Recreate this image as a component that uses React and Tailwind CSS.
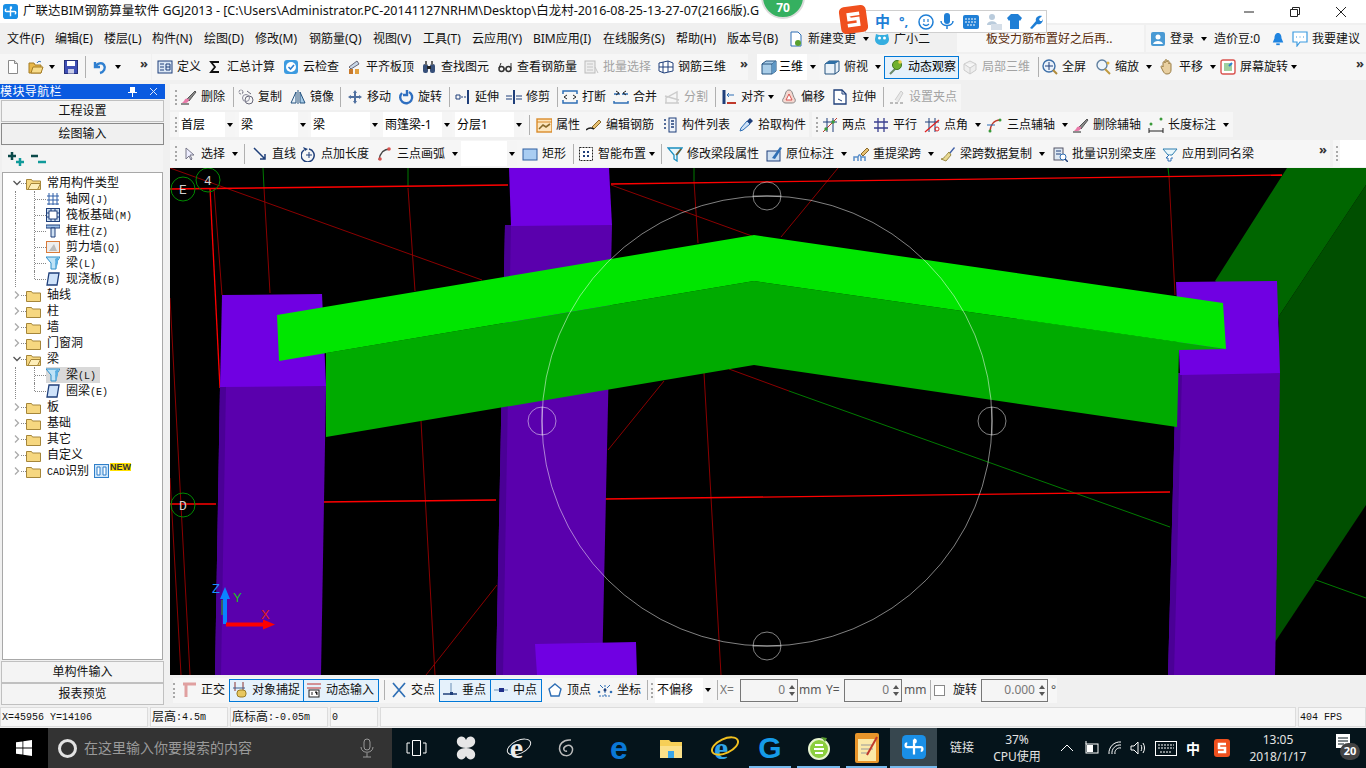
import React from 'react'

const B = '#2f6fb5'
const D = '#1f3f7a'
const icons = {
  new: <><path d="M3.5 1.5h6l3 3v10h-9z" fill="#fff" stroke="#8a8a8a" /><path d="M9.5 1.5v3h3" fill="#ddd" stroke="#8a8a8a" /></>,
  open: <><path d="M1 4h5l1 2h6v8H1z" fill="#e8b84a" stroke="#a57c25" /><path d="M3 14l2-6h10l-2 6z" fill="#f7dc8b" stroke="#a57c25" /><path d="M9 4c1-2 3-2 4-1" stroke="#2f6fb5" fill="none" /></>,
  save: <><rect x="1.5" y="1.5" width="13" height="13" fill="#3f4fb5" stroke="#26307a" /><rect x="4" y="2" width="8" height="5" fill="#fff" /><rect x="5" y="10" width="6" height="4.5" fill="#c9cde8" /></>,
  undo: <path d="M3 3v5h5M3.5 8C5 4 10 3 12 6s0 7-4 8" fill="none" stroke="#2f7fd0" strokeWidth="2.4" />,
  calc: <><rect x="1" y="2" width="14" height="12" fill="#dbe7f5" stroke={D} /><path d="M3 5h4M3 8h4M3 11h4M9 5h4v6H9zM9 8h4" stroke={D} fill="none" /></>,
  sigma: <path d="M12 3H4l4 5-4 5h8" fill="none" stroke="#111" strokeWidth="1.8" />,
  check: <><rect x="1" y="1" width="14" height="14" rx="3" fill="#3d9be0" /><circle cx="8" cy="8" r="5" fill="#fff" /><path d="M5.5 8l2 2 3.5-4" fill="none" stroke="#2f7fd0" strokeWidth="1.6" /></>,
  level: <><path d="M3 8l8-6 2 3-8 5z" fill="#c9d8e8" stroke="#667" /><rect x="3" y="10" width="4" height="5" fill="#c97a2b" /><rect x="9" y="10" width="4" height="5" fill="#e0a040" /></>,
  find: <><rect x="2" y="5" width="5" height="9" rx="2" fill="#37507a" /><rect x="9" y="5" width="5" height="9" rx="2" fill="#37507a" /><rect x="4" y="2" width="2" height="4" fill="#666" /><rect x="10" y="2" width="2" height="4" fill="#666" /><rect x="6" y="7" width="4" height="3" fill="#222" /></>,
  glasses: <><circle cx="4.5" cy="10" r="2.5" fill="none" stroke="#333" strokeWidth="1.5" /><circle cx="11.5" cy="10" r="2.5" fill="none" stroke="#333" strokeWidth="1.5" /><path d="M7 10h2M2 9l2-5M14 9V4" stroke="#333" fill="none" /></>,
  batch: <><rect x="2" y="2" width="10" height="12" fill="#eee" stroke="#bbb" /><path d="M4 5h6M4 8h6M4 11h6M12 8l3 6" stroke="#c4c4c4" /></>,
  grid3d: <path d="M1 4l9-2 5 2v8l-9 2-5-2zM1 8l14 0M5 3v11M10 2v11" fill="#fff" stroke={D} />,
  cube: <><path d="M1 5l4-3h10v10l-4 3H1z" fill="#a9cde8" stroke="#24527f" /><path d="M1 5h10v10M11 5l4-3" fill="none" stroke="#24527f" /><path d="M11 5l4-3v10l-4 3z" fill="#5f97c4" /></>,
  top: <><path d="M1 5l4-3h10v10l-4 3H1z" fill="#eaf2f9" stroke="#24527f" /><path d="M1 5l4-3h10l-4 3z" fill="#2f6fa5" /><path d="M11 5v10" stroke="#24527f" /></>,
  orbit: <><path d="M2 15L13 4" stroke="#6a8a6a" strokeWidth="2" /><circle cx="9" cy="6" r="4.5" fill="#6fb02f" stroke="#3f7a1f" /><circle cx="12" cy="3" r="1.8" fill="#e8d04a" /></>,
  local: <path d="M2 5l6-3 6 3v6l-6 4-6-4zM2 5l6 4 6-4M8 9v6" fill="#eee" stroke="#ccc" />,
  zoomfit: <><circle cx="7" cy="7" r="6" fill="#eaf2fb" stroke="#3d6fa8" strokeWidth="1.4" /><path d="M7 3v8M3 7h8" stroke="#1f3f7a" /><path d="M11 11l4 4" stroke="#b08a3a" strokeWidth="2" /></>,
  zoom: <><circle cx="7" cy="6" r="5" fill="#eef5fb" stroke="#5f7f9f" strokeWidth="1.4" /><path d="M10 10l5 5" stroke="#c09a40" strokeWidth="2" /><circle cx="13" cy="4" r="1.5" fill="#e0b040" /></>,
  pan: <path d="M4 8V4c0-2 2-2 2 0V2c0-2 2-2 2 0v1c0-2 2-2 2 0v2c0-2 2-1 2 0v6c0 2-1 4-4 4-2 0-3-1-4-3L2 8c0-1 1-2 2 0z" fill="#e8cfa0" stroke="#9a7d45" />,
  screen: <><rect x="1" y="1" width="14" height="14" rx="2" fill="#fff" stroke="#d9534f" strokeWidth="1.4" /><rect x="4" y="4" width="8" height="8" fill="#9fd0a0" /><path d="M12 4l-3 3" stroke="#2f7fd0" strokeWidth="2" /></>,
  brush: <><path d="M6 10l8-8 1 1-7 9z" fill="#8a8a8a" stroke="#555" /><path d="M3 12c1-3 3-3 5-2 0 2-1 4-4 4H1z" fill="#e87aa8" /><path d="M0 15h8" stroke="#222" /></>,
  copy: <><circle cx="11" cy="11" r="4" fill="none" stroke="#667" /><circle cx="8" cy="9" r="3.5" fill="none" stroke="#889" /><circle cx="3" cy="3" r="2" fill="none" stroke="#667" strokeDasharray="2 1" /><path d="M9 2l4 3" stroke="#667" /></>,
  mirror: <><path d="M6 3L1 14h5z" fill="#eaf2f9" stroke="#24527f" /><path d="M10 3l5 11h-5z" fill="#a9cde8" stroke="#24527f" /><path d="M8 1v14" stroke="#24527f" /></>,
  move: <path d="M8 1l2 3H9v3h3V6l3 2-3 2V9H9v3h1l-2 3-2-3h1V9H4v1L1 8l3-2v1h3V4H6z" fill="#4f6f9f" />,
  rotate: <path d="M4 4a6 6 0 1 0 7-1M9 1v5H5" fill="none" stroke="#2f6fc0" strokeWidth="2.4" />,
  extend: <><path d="M1 6h4v4H1z" fill="none" stroke={D} /><path d="M6 8h5" stroke={D} strokeDasharray="2 1" /><path d="M13 1v14" stroke={D} strokeWidth="2" /></>,
  trim: <><path d="M0 7h6M0 10h6M10 7h6M10 10h6" stroke={D} /><path d="M8 1v14" stroke={D} strokeWidth="2" /></>,
  breakk: <><path d="M1 5V2h14v3M1 11v3h14v-3" fill="none" stroke={B} strokeWidth="1.5" /><path d="M5 6L2 8l3 2M11 6l3 2-3 2" fill="none" stroke="#222" /></>,
  merge: <><path d="M1 12v2h14v-2M1 5h6M9 5h6" fill="none" stroke={B} strokeWidth="1.5" /><path d="M3 2l3 2-3 2M13 2l-3 2 3 2" fill="none" stroke="#222" /></>,
  split: <path d="M1 14h14M2 14V9l11-6v11M1 7l14 4" fill="none" stroke="#ccc" strokeWidth="1.4" />,
  align: <><path d="M3 1v14" stroke={D} strokeWidth="3" /><path d="M6 14h9" stroke="#c0392b" strokeWidth="2" /><path d="M6 6h7M8 4L6 6l2 2" stroke="#2f6fb5" fill="none" /></>,
  offset: <><path d="M8 1c4 0 3 5 6 9 1 3-1 4-3 4H5c-3 0-4-2-3-4 3-4 2-9 6-9z" fill="#f5d7d0" stroke="#888" /><path d="M8 5l3 6H5z" fill="#fff" stroke="#d9534f" /></>,
  stretch: <><path d="M2 1h8l4 4v10H2z" fill="#fff" stroke={D} strokeWidth="1.3" /><path d="M10 1v4h4M6 10l4 2" stroke={D} fill="none" /></>,
  grippt: <><path d="M6 11l6-9 2 2-5 9" fill="#e8e8e8" stroke="#ccc" /><path d="M1 14h3M6 14h3M11 14h3" stroke="#bbb" strokeWidth="2" /></>,
  attr: <><rect x="1" y="2" width="15" height="13" fill="#fde6bd" stroke="#d98b2b" strokeWidth="1.4" /><path d="M1 5h15" stroke="#d98b2b" /><path d="M3 12l4-4 3 2 4-3" stroke="#8a6a2a" strokeWidth="1.6" fill="none" /></>,
  edit: <><path d="M6 10l7-7 2 2-7 7z" fill="#e8c070" stroke="#8a6a2a" /><path d="M0 13c3-3 6-2 8-1" stroke="#222" fill="none" strokeWidth="1.4" /></>,
  list: <><rect x="7" y="1" width="7" height="14" fill="#eef3fa" stroke={D} /><path d="M9 4h3M9 7h3M9 10h3M2 3h2M2 7h2M2 11h2" stroke={D} strokeWidth="1.5" /></>,
  pick: <><path d="M2 14l1-3 6-7 3 3-7 6z" fill="#cfe2f7" stroke={B} /><path d="M9 4l3-3 3 3-3 3z" fill={D} /></>,
  twopt: <><path d="M1 15L15 1" stroke="#c0392b" /><path d="M5 1v14M11 1v14M1 5h14" stroke={D} /><circle cx="11" cy="5" r="1.7" fill="#3a9a3a" /><circle cx="4" cy="12" r="1.7" fill="#3a9a3a" /></>,
  parallel: <path d="M5 1v14M11 1v14M1 5h14M1 11h14" stroke="#3a3f8f" strokeWidth="1.3" />,
  angle: <><path d="M5 1v14M11 1v14M1 5h14" stroke={D} /><path d="M1 15L15 3" stroke="#e02020" strokeWidth="1.3" /><circle cx="13" cy="12" r="2" fill="none" stroke="#e02020" /></>,
  arc3: <><path d="M3 15C3 8 7 3 13 3" fill="none" stroke="#c0392b" strokeWidth="1.4" /><path d="M0 8h8" stroke={B} /><circle cx="3" cy="14" r="1.5" fill="#3a9a3a" /><circle cx="13" cy="3" r="1.5" fill="#3a9a3a" /></>,
  dim: <><circle cx="3" cy="7" r="1.5" fill="#3a9a3a" /><circle cx="13" cy="2" r="1.5" fill="#3a9a3a" /><path d="M1 14h14M1 11v5M15 11v5" stroke="#222" /></>,
  arrowsel: <path d="M5 2v11l3-3 2 4 1-1-2-4h4z" fill="#eef" stroke="#778" />,
  line: <path d="M2 2l11 11M13 8v5H8" fill="none" stroke={D} strokeWidth="1.5" />,
  pluslen: <><path d="M3 4a6.5 6.5 0 1 0 5-1" fill="none" stroke={D} strokeWidth="1.5" /><path d="M8 6v6M5 9h6" stroke={D} /><path d="M2 1l2 4 3-2" fill={D} /></>,
  arc: <><path d="M2 14C3 7 7 3 13 3" fill="none" stroke="#444" strokeWidth="1.3" /><circle cx="3" cy="13" r="1.8" fill="#d9534f" /><circle cx="12" cy="3" r="1.8" fill="#d9534f" /></>,
  rect: <rect x="1" y="3" width="14" height="11" fill="#a9cdf2" stroke="#2f5f9f" />,
  smart: <><rect x="1.5" y="1.5" width="13" height="13" fill="#fff" stroke="#222" strokeDasharray="2 1" /><path d="M5 5h2v2H5zM9 9h2v2H9zM9 5h2v2H9zM5 9h2v2H5z" fill={D} /></>,
  funnel: <><path d="M1 2h14l-5 7v6l-3-2V9z" fill="#e8f6fb" stroke="#1a8fbf" strokeWidth="1.3" /><path d="M9 9l5-6" stroke="#7a5a2a" strokeWidth="1.5" /></>,
  origin: <><rect x="1" y="5" width="13" height="10" fill="#cfe0f2" stroke={D} /><path d="M6 12L14 1l2 1-7 11z" fill={B} /></>,
  lift: <><path d="M1 15v-4h4v4M8 15v-4h4v4M5 11c1-3 2-3 3 0" stroke="#5a8fc9" fill="none" strokeWidth="1.5" /><path d="M8 8l6-6 2 2-6 6z" fill="#e8c070" stroke="#8a6a2a" /></>,
  broom: <><path d="M9 7l5-6 1 1-5 6z" fill="#3f5fa5" /><path d="M9 6l2 3-5 6-5-2c3 0 5-4 8-7z" fill="#e8d890" stroke="#9a8a45" /></>,
  recog: <><rect x="2" y="2" width="9" height="12" fill="#dde8f3" stroke="#556" /><path d="M4 5h5M4 8h5" stroke={D} /><circle cx="11" cy="11" r="3" fill="#fff" stroke="#2f6fb5" /><path d="M13 13l3 3" stroke={D} strokeWidth="1.5" /></>,
  apply: <><path d="M1 3h14l-5 6H6z" fill="#e8f6fb" stroke="#2f7fb0" /><path d="M7 9l-3 3h2v3h3v-3h2" fill="#fff" stroke="#2f6fb5" /></>,
  ortho: <><path d="M2 2h13M5 2v13" stroke="#e0a0a0" strokeWidth="3" /></>,
  snap: <><path d="M3 0v9M11 0v9" stroke="#8a3030" /><path d="M1 6h12" stroke="#3f5f8f" /><rect x="5" y="8" width="9" height="7" rx="3" fill="#e8c860" stroke="#9a7d25" /></>,
  dyn: <><path d="M1 2h14M1 6h14" stroke="#c03030" /><rect x="3" y="8" width="10" height="7" fill="#fff" stroke="#222" /><path d="M6 10v3M9 10h2v3" stroke="#222" /></>,
  cross: <path d="M2 1l12 14M14 1L2 15" stroke={B} strokeWidth="1.7" />,
  perp: <><path d="M1 12h14" stroke={D} strokeWidth="1.5" /><path d="M9 1v11" stroke="#6a8fb5" /><rect x="8" y="10" width="3" height="3" fill={D} /></>,
  mid: <><path d="M1 8h14" stroke="#6a8fb5" /><rect x="6" y="6" width="5" height="4" fill="#1f2f8a" /></>,
  vert: <path d="M8 2l6 5-2 7H4L2 7z" fill="#fff" stroke={B} strokeWidth="1.4" />,
  coord: <><path d="M2 14h12M8 14V2" stroke={B} strokeDasharray="2 1" /><path d="M3 3l3 3M13 3l-3 3" stroke={B} /><circle cx="8" cy="8" r="1.5" fill={D} /><circle cx="2" cy="10" r="1.3" fill={B} /><circle cx="14" cy="10" r="1.3" fill={B} /></>,
  doc: <><path d="M3 1h7l3 3v11H3z" fill="#fff" stroke="#2f6fb5" /><circle cx="10" cy="12" r="3" fill="#5aa02f" /></>,
  mascot: <><path d="M2 3l3 1h6l3-1 1 5c0 4-3 6-7 6s-7-2-7-6z" fill="#35aee0" /><circle cx="5.5" cy="7" r="1.5" fill="#fff" /><circle cx="10.5" cy="7" r="1.5" fill="#fff" /></>,
  login: <><rect x="1" y="1" width="14" height="14" rx="2" fill="#4a9ad4" /><circle cx="8" cy="6" r="2.5" fill="#fff" /><path d="M3 13c1-4 9-4 10 0z" fill="#fff" /></>,
  bell: <><path d="M8 1c3 0 4 3 4 6l2 5H2l2-5c0-3 1-6 4-6z" fill="#1f84e0" /><rect x="6" y="13" width="4" height="2" fill="#1f84e0" /></>,
  chat: <><path d="M1 1h14v10H8l-3 4v-4H1z" fill="#fff" stroke="#3d9be0" strokeWidth="1.2" /><path d="M4 6h1M7.5 6h1M11 6h1" stroke="#3d9be0" /></>,
}

function Ico({ name, cls = 'w-4 h-4' }) {
  return <svg viewBox="0 0 16 16" className={`${cls} shrink-0`}>{icons[name]}</svg>
}

function Caret({ cls = '' }) {
  return <span className={`inline-block shrink-0 border-x-[3px] border-t-[4px] border-x-transparent border-t-black ${cls}`} />
}

function Grip({ w = 'w-[6px]' }) {
  return <span className={`block h-[15px] shrink-0 ${w}`}><span className="block h-full w-[2px] border-l-2 border-dotted border-[#a8a8a8]" /></span>
}

function Sep({ w }) {
  return <span className={`block h-[20px] shrink-0 border-l border-[#b0b0b0] ${w}`} />
}

// c = caret after the label, tight = caret set close to the label
function Tool({ i, t, w = '', c, tight, off }) {
  return (
    <div className={`flex h-full shrink-0 items-center gap-1 whitespace-nowrap ${w} ${off ? 'text-[#a3a3a3]' : 'text-[#111]'}`}>
      <Ico name={i} />
      <span>{t}</span>
      {c && <Caret cls={tight ? 'ml-[-1px]' : 'ml-[3px]'} />}
    </div>
  )
}

function Select({ t, w, mr = 'mr-[3px]' }) {
  return (
    <div className={`flex h-[25px] shrink-0 items-center bg-white pl-[2px] ${w} ${mr}`}>
      <span className="flex-1 whitespace-nowrap">{t}</span>
      <span className="flex h-full w-[10px] items-center justify-center bg-[#f5f5f5]"><Caret /></span>
    </div>
  )
}

function More({ cls }) {
  return <span className={`text-[13px] font-bold leading-none text-[#333] ${cls}`}>»</span>
}

const bar = 'flex items-center bg-[#f6f6f6]'

const menus = [
  ['文件(F)', 'w-[48px]'], ['编辑(E)', 'w-[49px]'], ['楼层(L)', 'w-[48px]'], ['构件(N)', 'w-[52px]'], ['绘图(D)', 'w-[51px]'],
  ['修改(M)', 'w-[54px]'], ['钢筋量(Q)', 'w-[64px]'], ['视图(V)', 'w-[50px]'], ['工具(T)', 'w-[49px]'], ['云应用(Y)', 'w-[61px]'],
  ['BIM应用(I)', 'w-[70px]'], ['在线服务(S)', 'w-[73px]'], ['帮助(H)', 'w-[51px]'], ['版本号(B)', 'w-[61px]'],
]

function Glodon({ cls }) {
  return (
    <svg viewBox="0 0 16 16" className={`shrink-0 ${cls}`}>
      <rect width="16" height="16" rx="3" fill="#1a8fe6" />
      <path d="M8 3v10M8 8H3.500c-1.500 0-1.500-2.500 0-2.500M8 8h4.500c1.500 0 1.500 2.500 0 2.500M8 3c1.500 0 1.500 2 0 2" fill="none" stroke="#fff" strokeWidth="1.500" />
    </svg>
  )
}

function TitleBar() {
  return (
    <div className="flex h-[23px] items-center bg-white pl-[3px] text-[12.5px] text-[#111]">
      <Glodon cls="h-[17px] w-[15px]" />
      <span className="ml-[5px] whitespace-nowrap">广联达BIM钢筋算量软件 GGJ2013 - [C:\Users\Administrator.PC-20141127NRHM\Desktop\白龙村-2016-08-25-13-27-07(2166版).G</span>
      <div className="ml-auto flex h-full items-center">
        <svg width="12" height="12" viewBox="0 0 12 12" className="mr-[34px]"><path d="M1 6h10" stroke="#222" /></svg>
        <svg width="12" height="12" viewBox="0 0 12 12" className="mr-[34px]"><path d="M1.500 3.500h7v7h-7zM3.500 3.500v-2h7v7h-2" fill="none" stroke="#222" /></svg>
        <svg width="12" height="12" viewBox="0 0 12 12" className="mr-[19px]"><path d="M1 1l10 10M11 1L1 11" stroke="#222" /></svg>
      </div>
    </div>
  )
}

function MenuBar() {
  return (
    <div className="flex h-[31px] items-center text-[12px] text-[#111]">
      <div className="ml-[7px] flex">
        {menus.map(([t, w]) => <span key={t} className={`whitespace-nowrap ${w}`}>{t}</span>)}
      </div>
      <Tool i="doc" t="新建变更" c w="w-[86px]" />
      <Tool i="mascot" t="广小二" w="w-[83px]" />
      <div className="flex h-[27px] w-[187px] items-center bg-[#f8f8f8] pl-[29px] text-[#5a2d0c]">板受力筋布置好之后再..</div>
      <div className={`${bar} ml-[2px] h-[27px] flex-1 pl-[4px]`}>
        <Tool i="login" t="登录" c w="w-[64px]" />
        <span className="w-[57px]">造价豆:0</span>
        <Ico name="bell" cls="w-[14px] h-4 mr-[7px]" />
        <Tool i="chat" t="我要建议" />
      </div>
    </div>
  )
}

function TopBar() {
  return (
    <div className="flex h-[30px] items-start gap-px text-[12px]">
      <div className={`${bar} relative h-[26px] w-[151px] pl-[5px]`}>
        <Ico name="new" cls="w-4 h-4 mr-[7px]" />
        <Ico name="open" />
        <Caret cls="ml-[5px] mr-[8px]" />
        <Ico name="save" />
        <span className="mx-[6px] h-[22px] border-l border-[#b0b0b0]" />
        <Ico name="undo" />
        <Caret cls="ml-[7px]" />
        <More cls="absolute right-[3px] top-[3px]" />
      </div>
      <div className={`${bar} relative h-[26px] w-[596px] pl-[5px]`}>
        <Tool i="calc" t="定义" w="w-[50px]" />
        <Tool i="sigma" t="汇总计算" w="w-[76px]" />
        <Tool i="check" t="云检查" w="w-[63px]" />
        <Tool i="level" t="平齐板顶" w="w-[75px]" />
        <Tool i="find" t="查找图元" w="w-[76px]" />
        <Tool i="glasses" t="查看钢筋量" w="w-[86px]" />
        <Tool i="batch" t="批量选择" w="w-[75px]" off />
        <Tool i="grid3d" t="钢筋三维" />
        <More cls="absolute right-[0px] top-[3px]" />
      </div>
      <div className={`${bar} relative ml-[8px] h-[26px] flex-1`}>
        <div className="flex h-full w-[62px] items-center gap-[2px] bg-white pl-[4px]">
          <Ico name="cube" /><span>三维</span><span className="ml-[2px] flex h-full flex-1 items-center justify-center bg-[#f5f5f5]"><Caret /></span>
        </div>
        <div className="ml-[5px] h-full w-[60px]"><Tool i="top" t="俯视" c /></div>
        <div className="flex h-[23px] w-[75px] items-center gap-1 border border-[#0078d7] bg-[#e5f1fb] pl-[3px]"><Ico name="orbit" /><span className="whitespace-nowrap">动态观察</span></div>
        <Tool i="local" t="局部三维" off w="ml-[3px] w-[76px]" />
        <Sep w="w-[4px]" />
        <Tool i="zoomfit" t="全屏" w="w-[53px]" />
        <Tool i="zoom" t="缩放" c w="w-[64px]" />
        <Tool i="pan" t="平移" c w="w-[61px]" />
        <Tool i="screen" t="屏幕旋转" c tight />
        <More cls="absolute right-[2px] top-[3px]" />
      </div>
    </div>
  )
}

const treeTop = [
  ['grid', '轴网(J)'], ['raft', '筏板基础(M)'], ['col', '框柱(Z)'], ['wall', '剪力墙(Q)'], ['beam', '梁(L)'], ['slab', '现浇板(B)'],
]

function TreeIcon({ k }) {
  if (k === 'grid') return <svg viewBox="0 0 14 14" className="h-[14px] w-[14px] shrink-0"><path d="M1 4h12M1 8h12M1 12h12M3 1v12M7 1v12M11 1v12" stroke="#2f5fa8" fill="none" /></svg>
  if (k === 'raft') return <svg viewBox="0 0 14 14" className="h-[14px] w-[14px] shrink-0"><rect x="0.500" y="0.500" width="13" height="13" fill="#cfe0f2" stroke={D} /><rect x="3" y="3" width="8" height="8" fill="#fff" stroke={D} /><path d="M1 5h2M1 9h2M11 5h2M11 9h2M5 1v2M9 1v2M5 11v2M9 11v2" stroke={D} /></svg>
  if (k === 'col') return <svg viewBox="0 0 14 14" className="h-[14px] w-[14px] shrink-0"><path d="M0 1h14v3H0z" fill="#9cc0e8" stroke={D} /><path d="M5 4h4v9H5z" fill="#cfe0f2" stroke={D} /></svg>
  if (k === 'wall') return <svg viewBox="0 0 14 14" className="h-[14px] w-[14px] shrink-0"><rect x="0.500" y="1.500" width="13" height="11" fill="#eee" stroke="#d97b3a" /><path d="M3 11l5-7 3 7z" fill="#bbb" /></svg>
  if (k === 'beam') return <svg viewBox="0 0 14 14" className="h-[14px] w-[14px] shrink-0"><path d="M0 1h14l-4 6v6H5V7z" fill="#bfe3f7" stroke="#2f8fc9" /><path d="M9 3l3-2v6l-2 6" fill="#5aaee0" /></svg>
  return <svg viewBox="0 0 14 14" className="h-[14px] w-[14px] shrink-0"><path d="M3 1h10l-2 12H1z" fill="#cfe3fa" stroke={D} strokeWidth="1.300" /></svg>
}

function Mix({ s }) {
  return s.split(/([\x00-\x7f]+)/).map((p, i) => (
    /^[\x00-\x7f]+$/.test(p) ? <span key={i} className="font-['Liberation_Mono',monospace] text-[10px]">{p}</span> : <span key={i}>{p}</span>
  ))
}

function Folder({ open }) {
  return (
    <svg viewBox="0 0 15 13" className="h-[13px] w-[15px] shrink-0">
      <path d="M0.500 2.500h5l1 1.500h8v8.500H0.500z" fill="#f6d780" stroke="#a5863a" />
      {open && <path d="M2 12.500l3-6h9.500l-3 6z" fill="#fdeeb9" stroke="#a5863a" />}
    </svg>
  )
}

function Parent({ t, open, extra }) {
  return (
    <div className="flex h-4 items-center pl-[10px]">
      <svg viewBox="0 0 8 8" className="h-2 w-2 shrink-0"><path d={open ? 'M0.500 2l3.500 3.500L7.500 2' : 'M2 0.500L5.500 4 2 7.500'} fill="none" stroke={open ? '#555' : '#aaa'} strokeWidth="1.300" /></svg>
      <span className="w-[5px] border-t border-dotted border-[#888]" />
      <Folder open={open} />
      <span className="ml-[6px] whitespace-nowrap"><Mix s={t} /></span>
      {extra}
    </div>
  )
}

function Child({ k, t, last, sel }) {
  return (
    <div className="flex h-4 items-center pl-[12px]">
      <span className="h-full w-[19px] border-l border-dotted border-[#888]" />
      <span className={`relative w-[12px] self-start border-l border-dotted border-[#888] ${last ? 'h-1/2' : 'h-full'}`}>
        <span className="absolute left-0 top-[8px] w-full border-t border-dotted border-[#888]" />
      </span>
      <span className={`flex h-full items-center ${sel ? 'w-[54px] bg-[#d9d9d9]' : ''}`}>
        <TreeIcon k={k} />
        <span className="ml-[6px] whitespace-nowrap"><Mix s={t} /></span>
      </span>
    </div>
  )
}

function NavButton({ t, pressed }) {
  return (
    <div className={`mx-px flex h-[22px] items-center justify-center border text-[12px] text-[#111] ${pressed ? 'border-[#8a8a8a] bg-[#f0f0f0]' : 'border-[#c0c0c0] bg-[#f4f4f4]'}`}>{t}</div>
  )
}

function LeftPanel() {
  return (
    <div className="flex w-[170px] shrink-0 flex-col pr-[5px]">
      <div className="flex h-[15px] items-center bg-[#0a5ae0] text-[12px] leading-none text-white">
        <span className="tracking-[0.4px]">模块导航栏</span>
        <svg width="9" height="10" viewBox="0 0 9 10" className="ml-[66px]"><path d="M2 0h5v5h2v1H5v4H4V6H0V5h2z" fill="#fff" /></svg>
        <svg width="9" height="9" viewBox="0 0 9 9" className="ml-[12px]"><path d="M1 1l7 7M8 1L1 8" stroke="#dbe6fb" /></svg>
      </div>
      <div className="mt-px"><NavButton t="工程设置" /></div>
      <div className="mt-px"><NavButton t="绘图输入" pressed /></div>
      <div className="mx-[2px] mt-px flex h-[26px] items-center bg-[#f4f4f4] pl-[5px]">
        <svg width="42" height="16" viewBox="0 0 42 16">
          <path d="M1 5h8M5 1v8" stroke="#0b4a4a" strokeWidth="2.500" />
          <path d="M9 11h8M13 7v8" stroke="#109a9a" strokeWidth="2.500" />
          <path d="M24 5h7" stroke="#0b4a4a" strokeWidth="2.500" />
          <path d="M31 11h8" stroke="#109a9a" strokeWidth="2.500" />
        </svg>
      </div>
      <div className="mx-[2px] min-h-0 flex-1 overflow-hidden border border-[#a8a8a8] bg-white pt-[2px] text-[12px] leading-none text-[#111]">
        <Parent t="常用构件类型" open />
        {treeTop.map(([k, t], i) => <Child key={t} k={k} t={t} last={i === treeTop.length - 1} />)}
        {['轴线', '柱', '墙', '门窗洞'].map(t => <Parent key={t} t={t} />)}
        <Parent t="梁" open />
        <Child k="beam" t="梁(L)" sel />
        <Child k="slab" t="圈梁(E)" last />
        {['板', '基础', '其它', '自定义'].map(t => <Parent key={t} t={t} />)}
        <Parent t="CAD识别" extra={
          <>
            <svg width="15" height="14" viewBox="0 0 15 14" className="ml-[5px] shrink-0"><rect x="0.500" y="0.500" width="14" height="13" fill="#cfe6fa" stroke="#2f7fc9" /><path d="M3 3h3v8H3zM9 3h3v8H9z" fill="#fff" stroke="#2f7fc9" /></svg>
            <span className="relative -top-[4px] ml-px bg-[#ffe000] font-['Liberation_Sans',sans-serif] text-[9px] font-bold leading-[8px] text-[#333]">NEW</span>
          </>
        } />
      </div>
      <div className="mt-px"><NavButton t="单构件输入" /></div>
      <NavButton t="报表预览" />
    </div>
  )
}

function RowA() {
  return (
    <div className={`${bar} h-[26px] w-[791px] pl-[5px]`}>
      <Grip />
      <Tool i="brush" t="删除" w="w-[52px]" />
      <Sep w="w-[5px]" />
      <Tool i="copy" t="复制" w="w-[52px]" />
      <Tool i="mirror" t="镜像" w="w-[50px]" />
      <Sep w="w-[7px]" />
      <Tool i="move" t="移动" w="w-[51px]" />
      <Tool i="rotate" t="旋转" w="w-[51px]" />
      <Sep w="w-[6px]" />
      <Tool i="extend" t="延伸" w="w-[51px]" />
      <Tool i="trim" t="修剪" w="w-[51px]" />
      <Sep w="w-[5px]" />
      <Tool i="breakk" t="打断" w="w-[51px]" />
      <Tool i="merge" t="合并" w="w-[51px]" />
      <Tool i="split" t="分割" w="w-[51px]" off />
      <Sep w="w-[6px]" />
      <Tool i="align" t="对齐" c tight w="w-[60px]" />
      <Tool i="offset" t="偏移" w="w-[51px]" />
      <Tool i="stretch" t="拉伸" w="w-[51px]" />
      <Sep w="w-[6px]" />
      <Tool i="grippt" t="设置夹点" off />
    </div>
  )
}

function RowB() {
  return (
    <div className="mt-[2px] flex h-[25px] gap-[3px]">
      <div className={`${bar} w-[639px] pl-[5px]`}>
        <Grip w="w-[4px]" />
        <Select t="首层" w="w-[56px]" mr="mr-[4px]" />
        <Select t="梁" w="w-[69px]" />
        <Select t="梁" w="w-[69px]" />
        <Select t="雨篷梁-1" w="w-[69px]" />
        <Select t="分层1" w="w-[69px]" mr="mr-[5px]" />
        <Sep w="w-[7px]" />
        <Tool i="attr" t="属性" w="w-[50px]" />
        <Tool i="edit" t="编辑钢筋" w="w-[76px]" />
        <Tool i="list" t="构件列表" w="w-[76px]" />
        <Tool i="pick" t="拾取构件" />
      </div>
      <div className={`${bar} w-[421px] pl-[4px]`}>
        <Grip />
        <Tool i="twopt" t="两点" w="w-[51px]" />
        <Tool i="parallel" t="平行" w="w-[51px]" />
        <Tool i="angle" t="点角" c w="w-[63px]" />
        <Tool i="arc3" t="三点辅轴" c w="w-[86px]" />
        <Tool i="brush" t="删除辅轴" w="w-[75px]" />
        <Tool i="dim" t="长度标注" c />
      </div>
    </div>
  )
}

function RowC() {
  return (
    <div className="mt-[3px] flex h-[27px] gap-[3px]">
      <div className={`${bar} relative w-[1160px] pl-[5px]`}>
        <Grip />
        <Tool i="arrowsel" t="选择" c w="w-[63px]" />
        <Sep w="w-[8px]" />
        <Tool i="line" t="直线" w="w-[49px]" />
        <Tool i="pluslen" t="点加长度" w="w-[76px]" />
        <Tool i="arc" t="三点画弧" c w="w-[84px]" />
        <Select t="" w="w-[56px]" mr="mr-[5px]" />
        <Tool i="rect" t="矩形" w="w-[51px]" />
        <Sep w="w-[5px]" />
        <Tool i="smart" t="智能布置" c tight w="w-[83px]" />
        <Sep w="w-[6px]" />
        <Tool i="funnel" t="修改梁段属性" w="w-[99px]" />
        <Tool i="origin" t="原位标注" c w="w-[87px]" />
        <Tool i="lift" t="重提梁跨" c w="w-[87px]" />
        <Tool i="broom" t="梁跨数据复制" c w="w-[112px]" />
        <Tool i="recog" t="批量识别梁支座" w="w-[110px]" />
        <Tool i="apply" t="应用到同名梁" />
        <More cls="absolute right-[3px] top-[3px]" />
      </div>
      <div className={`${bar} flex-1 pl-[3px]`}>
        <Grip w="w-[4px]" />
        <span className="h-full flex-1 bg-white" />
      </div>
    </div>
  )
}

function Canvas() {
  const dark = '#8b0000'
  const red = '#ff0000'
  const green = '#007a00'
  const ring = 'rgba(255,255,255,0.5)'
  const darkLines = [
    [170, 168, 482, 280], [611, 185, 752, 236], [729, 369, 789, 391], [214, 188, 222, 295], [264, 188, 270, 293], [408, 188, 415, 291],
    [694, 181, 698, 243], [1169, 176, 1175, 295], [838, 168, 781, 237], [664, 381, 608, 450], [497, 585, 426, 675], [704, 373, 721, 675],
    [421, 421, 435, 675], [170, 298, 190, 675], [170, 478, 181, 675],
  ]
  const greenLines = [
    [789, 391, 1170, 527], [1316, 580, 1366, 598], [263, 168, 264, 188], [408, 168, 408, 186], [694, 168, 694, 181], [1168, 168, 1169, 176],
  ]
  const redLines = [
    [170, 189, 508, 185], [611, 184, 1282, 175], [170, 504, 216, 504], [322, 502, 496, 500], [604, 499, 1170, 492], [210, 188, 220, 388],
  ]
  return (
    <div className="min-h-0 flex-1 bg-black">
      <svg viewBox="170 168 1196 507" className="block h-full w-full">
        {darkLines.map((l, i) => <line key={i} x1={l[0]} y1={l[1]} x2={l[2]} y2={l[3]} stroke={dark} />)}
        {greenLines.map((l, i) => <line key={i} x1={l[0]} y1={l[1]} x2={l[2]} y2={l[3]} stroke={green} />)}
        {redLines.map((l, i) => <line key={i} x1={l[0]} y1={l[1]} x2={l[2]} y2={l[3]} stroke={red} strokeWidth="1.300" />)}

        <polygon points="1287,168 1366,168 1366,185 1279,316 1277,330 1215,281" fill="#006600" />
        <polygon points="1366,185 1366,505 1275,642 1279,316" fill="#004f00" />

        <polygon points="215,675 220,386 326,386 321,675" fill="#5a00ad" />
        <polygon points="215,675 220,386 226,386 221,675" fill="#4a0096" />
        <polygon points="222,295 322,294 326,386 220,387" fill="#7000e2" />

        <polygon points="496,675 505,225 612,225 602,675" fill="#5a00ad" />
        <polygon points="496,675 505,225 511,225 503,675" fill="#4a0096" />
        <polygon points="509,168 609,168 612,225 511,226" fill="#7000e2" />
        <polygon points="535,644 636,642 637,675 537,675" fill="#7000e2" />

        <polygon points="1168,675 1176,373 1280,373 1275,675" fill="#5a00ad" />
        <polygon points="1168,675 1176,373 1182,373 1174,675" fill="#4a0096" />
        <polygon points="1176,282 1277,281 1280,373 1180,375" fill="#7000e2" />

        <polygon points="326,353 754,281 1179,342 1226,349 1179,350 1177,427 754,365 326,437" fill="#00ab00" />
        <polygon points="277,315 754,235 1223,303 1226,349 754,281 279,361" fill="#00e600" />

        <g fill="none" stroke={ring}>
          <circle cx="767" cy="421" r="225" />
          <circle cx="767" cy="196" r="14" />
          <circle cx="767" cy="646" r="14" />
          <circle cx="542" cy="421" r="14" />
          <circle cx="992" cy="421" r="14" />
          <path d="M753 196h28M753 646h28M542 407v28M992 407v28" />
        </g>

        <g fill="none" stroke="#008a00">
          <circle cx="183" cy="189" r="12" />
          <circle cx="208" cy="180" r="12" />
          <circle cx="183" cy="505" r="12" />
        </g>
        <g fill="#d0d0d0" fontSize="13" fontFamily="Liberation Mono, monospace" textAnchor="middle">
          <text x="183" y="194">E</text>
          <text x="208" y="185">4</text>
          <text x="183" y="510">D</text>
        </g>

        <path d="M225 624V598" stroke="#0a84ff" strokeWidth="4" />
        <path d="M225 587l-5 12h10z" fill="#0a84ff" />
        <path d="M222 600v15" stroke="#22c022" strokeWidth="1" />
        <path d="M226 624.500h38" stroke="#ff0000" strokeWidth="4" />
        <path d="M275 624.500l-12-5v10z" fill="#ff0000" />
        <g fontSize="13" fontFamily="Liberation Sans, sans-serif">
          <text x="212" y="593" fill="#1e90ff">Z</text>
          <text x="233" y="602" fill="#22c022">Y</text>
          <text x="261" y="619" fill="#e02020">X</text>
        </g>
      </svg>
    </div>
  )
}

function Toggle({ i, t, w }) {
  return (
    <div className={`flex h-[23px] shrink-0 items-center gap-1 border border-[#0078d7] bg-[#e5f1fb] pl-[2px] ${w}`}>
      <Ico name={i} /><span className="whitespace-nowrap">{t}</span>
    </div>
  )
}

function Spin({ v, w }) {
  return (
    <div className={`flex h-[23px] shrink-0 items-center justify-end border border-[#777] bg-[#f5f5f5] text-[#777] ${w}`}>
      <span>{v}</span>
      <span className="ml-[4px] mr-[2px] flex flex-col gap-[3px]">
        <span className="block border-x-[3px] border-b-[4px] border-x-transparent border-b-[#555]" />
        <span className="block border-x-[3px] border-t-[4px] border-x-transparent border-t-[#555]" />
      </span>
    </div>
  )
}

function BottomBar() {
  return (
    <div className="flex h-[30px] items-center text-[12px] text-[#111]">
      <div className={`${bar} ml-[3px] h-[25px] w-[884px]`}>
        <Grip w="w-[8px]" />
        <Tool i="ortho" t="正交" w="w-[48px]" />
        <Toggle i="snap" t="对象捕捉" w="w-[75px]" />
        <Toggle i="dyn" t="动态输入" w="w-[76px] -ml-px" />
        <Sep w="ml-[5px] w-[7px]" />
        <Tool i="cross" t="交点" w="w-[48px]" />
        <Toggle i="perp" t="垂点" w="w-[52px]" />
        <Toggle i="mid" t="中点" w="w-[52px] -ml-px" />
        <Tool i="vert" t="顶点" w="ml-[5px] w-[50px]" />
        <Tool i="coord" t="坐标" w="w-[50px]" />
        <Sep w="w-[4px]" />
        <Grip w="w-[4px]" />
        <div className="flex h-full w-[58px] items-center bg-white pl-[2px]">
          <span className="flex-1 whitespace-nowrap">不偏移</span>
          <span className="flex h-full w-[10px] items-center justify-center bg-[#f5f5f5]"><Caret /></span>
        </div>
        <Sep w="ml-[4px] w-[3px]" />
        <span className="w-[20px] text-[#777]">X=</span>
        <Spin v="0" w="w-[58px]" />
        <span className="ml-px w-[27px] text-[#555]">mm</span>
        <span className="w-[18px] text-[#555]">Y=</span>
        <Spin v="0" w="w-[58px]" />
        <span className="ml-[2px] w-[26px] text-[#555]">mm</span>
        <Sep w="w-[4px]" />
        <span className="h-[11px] w-[11px] shrink-0 border border-[#888] bg-white" />
        <span className="ml-[8px] w-[28px]">旋转</span>
        <Spin v="0.000" w="w-[67px]" />
        <span className="ml-[3px] text-[#555]">°</span>
      </div>
    </div>
  )
}

function StatusBar() {
  const cell = 'flex h-[20px] shrink-0 items-center border border-[#dcdcdc] bg-[#f7f7f7] pl-[1px]'
  return (
    <div className="flex h-[23px] items-end gap-[2px] pb-px text-[12px] text-[#111]">
      <div className={`${cell} w-[148px]`}><Mix s="X=45956 Y=14106" /></div>
      <div className={`${cell} w-[78px]`}><Mix s="层高:4.5m" /></div>
      <div className={`${cell} w-[98px]`}><Mix s="底标高:-0.05m" /></div>
      <div className={`${cell} w-[48px]`}><Mix s="0" /></div>
      <div className={`${cell} w-[916px]`} />
      <div className={`${cell} flex-1`}><Mix s="404 FPS" /></div>
    </div>
  )
}

// widths keep each taskbar icon centred where the reference has it; third value = running app underline
const apps = [
  ['w-[49px]', <svg key="tv" width="21" height="16" viewBox="0 0 21 16"><path d="M6.500 0.500h8v15h-8zM4 3H1v10h3M17 3h3v10h-3" fill="none" stroke="#fff" /></svg>],
  ['w-[50px]', <svg key="fan" width="22" height="26" viewBox="0 0 22 26"><path d="M11 13C4 13 1 9 2 5s7-5 9 0zM11 13c7 0 10-4 9-8s-7-5-9 0zM11 13c-7 0-10 4-9 8s7 5 9 0zM11 13c7 0 10 4 9 8s-7 5-9 0z" fill="#e6e6e6" /></svg>],
  ['w-[51px]', <span key="ie" className="relative font-['Liberation_Serif',serif] text-[30px] font-bold leading-none text-[#ececec]">e<span className="absolute -left-[4px] top-[7px] h-[14px] w-[26px] -rotate-[25deg] rounded-[50%] border border-[#ececec]" /></span>],
  ['w-[50px]', <svg key="sw" width="20" height="20" viewBox="0 0 20 20"><path d="M14 2C6 1 1 7 3 13s10 6 12 1-2-8-6-6-2 6 1 5" fill="none" stroke="#bbb" strokeWidth="1.500" /></svg>],
  ['w-[54px]', <span key="ed" className="font-['Liberation_Sans',sans-serif] text-[32px] font-bold leading-none text-[#0a78d7]">e</span>],
  ['w-[50px]', <svg key="fx" width="22" height="20" viewBox="0 0 22 20"><path d="M0 2h9l2 2h11v16H0z" fill="#f6cf58" /><rect y="8" width="22" height="12" fill="#fbe08a" /><rect x="8" y="13" width="6" height="7" fill="#3aa5e8" /></svg>],
  ['w-[50px]', <span key="ie2" className="relative font-['Liberation_Serif',serif] text-[32px] font-bold leading-none text-[#2ea3e8]">e<span className="absolute -left-[4px] top-[6px] h-[16px] w-[30px] -rotate-[25deg] rounded-[50%] border-2 border-[#f0c020]" /></span>],
  ['w-[48px]', <span key="g" className="font-['Liberation_Sans',sans-serif] text-[30px] font-bold leading-none text-[#159be8]">G</span>, 'u'],
  ['w-[49px]', <svg key="ge" width="24" height="28" viewBox="0 0 24 28"><circle cx="12" cy="15" r="10" fill="#8ccf3e" stroke="#e8f5d0" strokeWidth="2" /><path d="M7 15h10M8 11h8M8 19h8" stroke="#fff" strokeWidth="2" /><path d="M14 3l6 1-2 4z" fill="#5aa02f" /></svg>, 'u'],
  ['w-[47px]', <svg key="nt" width="24" height="30" viewBox="0 0 24 30"><rect width="24" height="30" rx="2" fill="#e8952a" /><rect x="3" y="6" width="18" height="22" fill="#fbe9a8" /><path d="M6 12h12M6 16h12M6 20h8" stroke="#999" /><path d="M12 22L22 4" stroke="#c0392b" strokeWidth="2" /></svg>, 'u'],
]

function Taskbar() {
  const tray = 'shrink-0 text-[#e8e8e8]'
  return (
    <div className="flex h-[40px] items-center bg-[#05141b] text-[12px] text-[#e4e4e4]">
      <div className="flex h-full w-[48px] items-center justify-center bg-black">
        <svg width="16" height="16" viewBox="0 0 16 16"><path d="M0 2.300l6.500-.9v6.200H0zM7.300 1.300L16 0v7.600H7.300zM0 8.400h6.500v6.200L0 13.700zM7.300 8.400H16V16l-8.700-1.300z" fill="#fff" /></svg>
      </div>
      <div className="flex h-full w-[344px] items-center bg-[#333333] pl-[10px] text-[13px] text-[#9a9a9a]">
        <span className="h-[19px] w-[19px] rounded-full border-[3px] border-[#e2e2e2]" />
        <span className="ml-[7px] whitespace-nowrap text-[14px] leading-none">在这里输入你要搜索的内容</span>
        <svg width="14" height="20" viewBox="0 0 14 20" className="ml-[108px]"><rect x="4" y="1" width="6" height="11" rx="3" fill="none" stroke="#999" /><path d="M1 9c0 7 12 7 12 0M7 15v4M3 19h8" fill="none" stroke="#999" /></svg>
      </div>
      {apps.map(([w, el, u], i) => (
        <div key={i} className={`relative flex h-full shrink-0 items-center justify-center ${w}`}>
          {el}
          {u && <span className="absolute bottom-0 left-[3px] right-[3px] h-[2px] bg-[#76b9ed]" />}
        </div>
      ))}
      <div className="flex h-full w-[47px] shrink-0 items-center justify-center border-b-2 border-[#76b9ed] bg-[#37474f]"><Glodon cls="h-[24px] w-[24px]" /></div>
      <span className="ml-[13px] w-[24px] whitespace-nowrap">链接</span>
      <div className="ml-[19px] flex w-[48px] flex-col items-center whitespace-nowrap leading-[17px]"><span>37%</span><span>CPU使用</span></div>
      <svg width="14" height="8" viewBox="0 0 14 8" className={`ml-[19px] ${tray}`}><path d="M1 7l6-6 6 6" fill="none" stroke="#fff" /></svg>
      <svg width="16" height="14" viewBox="0 0 16 14" className={`ml-[9px] ${tray}`}><rect x="3" y="3" width="12" height="9" fill="none" stroke="#fff" /><rect x="4" y="4" width="6" height="7" fill="#fff" /><path d="M3 0v3" stroke="#fff" /></svg>
      <svg width="16" height="14" viewBox="0 0 16 14" className={`ml-[9px] ${tray}`}><path d="M1 13A11 11 0 0 1 13 1M4 13a8 8 0 0 1 9-9M7 13a5 5 0 0 1 6-6" fill="none" stroke="#fff" /></svg>
      <svg width="16" height="14" viewBox="0 0 16 14" className={`ml-[6px] ${tray}`}><path d="M1 5h3l4-4v12l-4-4H1zM11 4c1 2 1 4 0 6M13 2c2 3 2 7 0 10" fill="none" stroke="#fff" /></svg>
      <svg width="22" height="15" viewBox="0 0 22 15" className={`ml-[9px] ${tray}`}><rect x="0.500" y="0.500" width="21" height="14" fill="none" stroke="#fff" /><path d="M3 4h16M3 7h16M5 11h12" stroke="#fff" strokeDasharray="2 1" /></svg>
      <span className="ml-[9px] w-[14px] text-[14px] font-bold text-white">中</span>
      <svg width="16" height="18" viewBox="0 0 16 18" className="ml-[14px] shrink-0"><rect width="16" height="18" rx="3" fill="#f0501e" /><path d="M12 5H5v4h6v4H4" fill="none" stroke="#fff" strokeWidth="2.500" /></svg>
      <div className="ml-[18px] flex w-[60px] flex-col items-center whitespace-nowrap leading-[17px]"><span>13:05</span><span>2018/1/17</span></div>
      <div className="relative ml-[27px] h-full flex-1">
        <svg width="14" height="14" viewBox="0 0 14 14" className="absolute left-[1px] top-[6px]"><rect width="14" height="14" fill="#fff" /><path d="M2 4h10M2 7h10M2 10h6" stroke="#05141b" /></svg>
        <span className="absolute left-[5px] top-[15px] flex h-[17px] w-[20px] items-center justify-center rounded-full bg-[#444] text-[11px] font-bold text-white">20</span>
      </div>
    </div>
  )
}

function Overlays() {
  return (
    <>
      <div className="absolute -top-[25px] left-[761px] flex h-[44px] w-[44px] items-end justify-center rounded-full border-2 border-[#dcdcdc] bg-[#35b060] pb-[3px] text-[12px] font-bold leading-none text-white">70</div>
      <div className="absolute left-[865px] top-[10px] flex h-[23px] w-[182px] items-center border border-[#cfcfcf] bg-white pl-[9px]">
        <span className="w-[24px] text-[15px] font-bold leading-none text-[#1f7fd6]">中</span>
        <span className="w-[19px] text-[13px] font-bold leading-none text-[#1f7fd6]">°,</span>
        <svg width="16" height="16" viewBox="0 0 16 16" className="mr-[6px]"><circle cx="8" cy="8" r="7" fill="none" stroke="#1f7fd6" strokeWidth="1.500" /><path d="M6 5v3M10 5v3M5 10c2 2 4 2 6 0" fill="none" stroke="#1f7fd6" strokeWidth="1.200" /></svg>
        <svg width="14" height="17" viewBox="0 0 14 17" className="mr-[9px]"><rect x="4" width="6" height="11" rx="3" fill="#1f7fd6" /><path d="M1 8c0 6 12 6 12 0M7 13v3" fill="none" stroke="#1f7fd6" strokeWidth="1.500" /></svg>
        <svg width="16" height="14" viewBox="0 0 16 14" className="mr-[7px]"><rect width="16" height="14" rx="2" fill="#1f7fd6" /><path d="M2 4h12M2 7h12M4 10h8" stroke="#fff" strokeDasharray="2 1" /></svg>
        <svg width="16" height="17" viewBox="0 0 16 17" className="mr-[5px]"><circle cx="6" cy="4" r="3" fill="#b9cbdc" /><path d="M1 12c0-5 10-5 10 0z" fill="#b9cbdc" /><rect x="5" y="11" width="11" height="6" fill="#d5dee8" /></svg>
        <svg width="15" height="15" viewBox="0 0 15 15" className="mr-[7px]"><path d="M4 0h7l4 4-2 3-1-1v9H3V6L2 7 0 4z" fill="#1f7fd6" /></svg>
        <svg width="14" height="15" viewBox="0 0 14 15"><path d="M1 14l6-7c-1-3 2-6 6-5l-3 3 1 2 2 0 1-2c0 4-3 6-6 5l-5 5z" fill="#1f7fd6" /></svg>
      </div>
      <div className="absolute left-[840px] top-[6px] flex h-[27px] w-[27px] -rotate-[8deg] items-center justify-center rounded-[5px] bg-[#f0501e]">
        <svg width="17" height="20" viewBox="0 0 17 20"><path d="M15 4H4v5h9v6H2" fill="none" stroke="#fff" strokeWidth="3.500" /></svg>
      </div>
    </>
  )
}

export default function App() {
  return (
    <div className="relative flex h-[768px] w-[1366px] flex-col overflow-hidden bg-[#f0f0f0] font-['Noto_Sans','Noto_Sans_CJK_SC',sans-serif]">
      <TitleBar />
      <MenuBar />
      <TopBar />
      <div className="flex h-[621px]">
        <LeftPanel />
        <div className="flex min-w-0 flex-1 flex-col text-[12px]">
          <RowA />
          <RowB />
          <RowC />
          <div className="h-px" />
          <Canvas />
          <BottomBar />
        </div>
      </div>
      <StatusBar />
      <Taskbar />
      <Overlays />
    </div>
  )
}
